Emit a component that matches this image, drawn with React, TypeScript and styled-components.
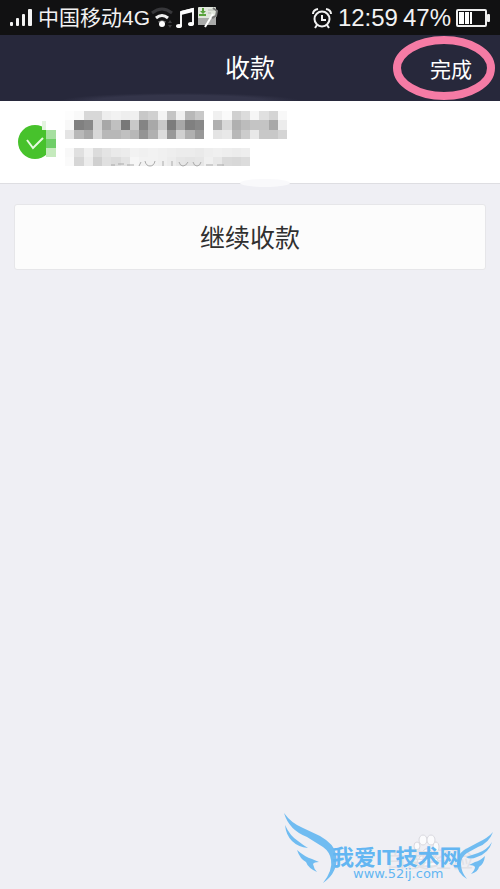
import React from 'react';
import styled, { createGlobalStyle } from 'styled-components';

const GlobalStyle = createGlobalStyle`
  * { box-sizing: border-box; }
  body {
    margin: 0;
    background: #efeff4;
    font-family: "Liberation Sans", "Noto Sans CJK SC", sans-serif;
  }
  button { font-family: inherit; cursor: pointer; }
`;

const Screen = styled.div`
  min-height: 100vh;
  display: flex;
  flex-direction: column;
`;

const StatusBar = styled.div`
  height: 35px;
  padding: 0 10px 0 9px;
  display: flex;
  align-items: center;
  justify-content: space-between;
  background: #111112;
  color: #f2f2f2;
`;

const StatusGroup = styled.div<{ $gap: number }>`
  display: flex;
  align-items: center;
  gap: ${(p) => p.$gap}px;
`;

const Carrier = styled.span`
  font-size: 21px;
  line-height: 32px;
  white-space: nowrap;
`;

const Reading = styled.span`
  font-size: 24px;
  line-height: 34px;
  white-space: nowrap;
`;

const Header = styled.header`
  height: 66px;
  display: grid;
  grid-template-columns: 1fr auto 1fr;
  align-items: center;
  background: radial-gradient(ellipse 120px 8px at 36% 100%, #34354a 0 70%, transparent) #27283b;
  color: #fff;
`;

const Title = styled.h1`
  grid-column: 2;
  margin: 0;
  font-size: 25px;
  font-weight: 400;
  line-height: 66px;
`;

const DoneButton = styled.button`
  justify-self: end;
  position: relative;
  height: 66px;
  padding: 0 28px 0 20px;
  border: 0;
  background: none;
  color: #fff;
  font-size: 21px;
`;

const Ring = styled.svg`
  position: absolute;
  right: 4px;
  top: 0;
  pointer-events: none;
`;

const Payer = styled.section`
  position: relative;
  height: 83px;
  padding: 10px 18px;
  display: flex;
  gap: 9px;
  background: #fff;
  border-bottom: 1px solid #dedee2;

  &::after {
    content: "";
    position: absolute;
    left: 240px;
    bottom: -4px;
    width: 50px;
    height: 8px;
    border-radius: 50%;
    background: #f9f9fb;
  }
`;

const PayerIcon = styled.svg`
  margin-top: 8px;
  flex: none;
`;

const Content = styled.main`
  padding: 20px 14px;
`;

const ContinueButton = styled.button`
  width: 100%;
  height: 66px;
  padding: 0 0 2px;
  border: 1px solid #e6e6e9;
  border-radius: 3px;
  background: #fcfcfc;
  color: #303030;
  font-size: 25px;
`;

const Footer = styled.footer`
  margin-top: auto;
  display: flex;
  justify-content: flex-end;
  padding-right: 4px;
`;

const MosaicSvg = styled.svg`
  flex: none;
`;

const mosaicRows: { y: number; h: number; cells: string[] }[] = [
  { y: 0, h: 9, cells: 'fd f9 d8 d8 ee f2 ee f0 c8 d0 f4 c4 f0 b8 c8 ff f0 fa d0 dc f6 e0 d4 f8'.split(' ') },
  { y: 9, h: 10, cells: 'f8 80 88 d4 a8 c0 78 c8 84 a8 c8 7c a8 80 88 ff b0 d8 b0 bc c4 c4 a8 ec'.split(' ') },
  { y: 19, h: 9, cells: 'e4 b8 a8 d8 b8 b8 c0 b8 94 b0 dc 98 d0 b0 98 ff e4 e8 b8 cc e8 c8 c8 d4'.split(' ') },
  { y: 37, h: 9, cells: 'f8 e0 f0 dc e4 ea ec f2 f0 f2 f0 ee ec ec ea ee f0 ee ec ee'.split(' ') },
  { y: 46, h: 9, cells: 'fa d6 ec d0 e0 dc e4 f6 f2 f2 f0 ec e6 e4 e6 f0 e8 da d8 dc'.split(' ') },
];

function Mosaic() {
  return (
    <MosaicSvg width="222" height="60" viewBox="0 0 222 60" shapeRendering="crispEdges" aria-hidden="true">
      {mosaicRows.map((row) =>
        row.cells.map((c, i) => {
          const x = Math.round(i * 9.25);
          const end = Math.round((i + 1) * 9.25);
          return <rect key={`${row.y}-${i}`} x={x} y={row.y} width={end - x} height={row.h} fill={`#${c}${c}${c}`} />;
        }),
      )}
      <g fill="none" stroke="#aaa" strokeWidth="1" shapeRendering="auto">
        <path d="M46 54h4m3-1h6m3 1h7M76 51l-2 4M80 50q1 5 5 5t5-5M98 50v5M107 50v5M114 51q1 4 4 4t5-4M128 51q1 4 4 4t4-4M141 54h7M152 54h7" />
      </g>
    </MosaicSvg>
  );
}

function Signal() {
  return (
    <svg width="23" height="19" viewBox="0 0 23 19" fill="#f4f4f4" aria-hidden="true">
      <rect x="1" y="14" width="3" height="4" rx="1" />
      <rect x="7" y="10" width="3" height="8" rx="1" />
      <rect x="13" y="6" width="3" height="12" rx="1" />
      <rect x="19" y="1" width="4" height="17" rx="1" />
    </svg>
  );
}

function StatusIcons() {
  return (
    <svg width="68" height="26" viewBox="0 0 68 26" fill="none" aria-hidden="true">
      <path d="M2 8Q12 0 22 8" stroke="#37373a" strokeWidth="3" />
      <path d="M6 13Q12 8 18 13" stroke="#ededed" strokeWidth="3" />
      <path d="M8 17Q12 14 16 17" stroke="#656565" strokeWidth="1" />
      <circle cx="12" cy="19" r="3" fill="#fff" />
      <path d="M18 18l2-3 2 3zM18 20h4l-2 3z" fill="#3c3c3e" />
      <path d="M31 21V7l12-3v15" stroke="#f4f4f4" strokeWidth="2" />
      <path d="M31 6l12-3v4l-12 3z" fill="#fff" />
      <ellipse cx="29" cy="21" rx="3" ry="2" fill="#fff" />
      <ellipse cx="41" cy="19" rx="3" ry="2" fill="#fff" />
      <rect x="48" y="2" width="18" height="18" rx="1" fill="#e1e6dd" />
      <path d="M48 13h18v7H48z" fill="#a9aaa9" />
      <path d="M52 3h2v3h2l-3 3-3-3h2zM49 9h7v2h-7z" fill="#59a33d" />
      <path d="M58 5h6M58 8h3" stroke="#b5bab3" />
      <path d="M55 22l8-13" stroke="#fff" strokeWidth="2" />
      <path d="M63 3l4 3-1 5-4 2" stroke="#777" strokeWidth="2" />
    </svg>
  );
}

function Alarm() {
  return (
    <svg width="22" height="22" viewBox="0 0 22 22" fill="none" stroke="#f2f2f2" strokeWidth="2" aria-hidden="true">
      <circle cx="11" cy="12" r="7.5" />
      <path d="M11 8v5h4M6 18l-2 3M16 18l2 3M2 7Q2 3 7 2M15 2q5 1 5 5" />
    </svg>
  );
}

function Battery() {
  return (
    <svg width="34" height="20" viewBox="0 0 34 20" aria-hidden="true">
      <rect x="1" y="2" width="29" height="16" rx="1" fill="none" stroke="#eee" strokeWidth="2" />
      <path d="M3 4h5v12H3zM9 4h4v12H9zM14 4h2v12h-2z" fill="#fff" />
      <rect x="31" y="6" width="3" height="8" rx="1" fill="#eee" />
    </svg>
  );
}

const WatermarkSvg = styled.svg`
  display: block;
  font-family: "Liberation Sans", "Noto Sans CJK SC", sans-serif;
`;

const WatermarkUrl = styled.text`
  font-family: "DejaVu Sans", sans-serif;
  font-size: 13px;
  font-weight: 400;
`;

function Watermark() {
  return (
    <WatermarkSvg width="216" height="79" viewBox="0 0 216 79" role="img" aria-label="我爱IT技术网 www.52ij.com">
      <g fill="#fbfbfd" stroke="#d9d9df" strokeWidth="1">
        <ellipse cx="137" cy="36" rx="3" ry="4" />
        <ellipse cx="143" cy="30" rx="4" ry="5" />
        <ellipse cx="151" cy="30" rx="4" ry="5" />
        <ellipse cx="156" cy="37" rx="3" ry="5" />
        <path d="M138 50q3-4 6-10 4-3 7 1 2 5 7 9 1 5-4 6h-14q-5-1-2-6z" />
      </g>
      <text x="105" y="57" fontSize="22" fill="#e1e1e6">百度经验</text>
      <g fill="#70bcf1">
        <path d="M4 3Q11 13 23 18L40 26Q54 34 56 44Q59 62 43 73Q53 60 51 50Q50 42 43 37L27 27Q9 20 4 3Z" />
        <path d="M5 15Q10 26 18 31Q23 35 28 38Q18 37 12 31Q6 25 5 15Z" />
        <path d="M17 40Q25 47 32 49L39 52Q34 52 33 54Q34 59 37 62Q28 58 26 52Q20 49 17 40Z" />
        <path d="M213 22Q209 33 198 37L187 43Q181 47 181 54Q181 62 187 69Q177 63 177 54Q177 45 184 40L197 33Q208 28 213 22Z" />
        <path d="M212 32Q207 40 198 43L186 47Q190 50 197 47Q209 43 212 32Z" />
        <path d="M205 46Q200 51 195 52L189 55Q194 55 195 57Q195 60 191 64Q198 62 199 57Q204 54 205 46Z" />
      </g>
      <g fill="#63b6f2" fontWeight="700">
        <text x="52" y="55" fontSize="22">我爱IT技术网</text>
        <WatermarkUrl x="73" y="68">www.52ij.com</WatermarkUrl>
      </g>
    </WatermarkSvg>
  );
}

export default function App() {
  return (
    <Screen>
      <GlobalStyle />
      <StatusBar>
        <StatusGroup $gap={6}>
          <Signal />
          <StatusGroup $gap={0}>
            <Carrier>中国移动4G</Carrier>
            <StatusIcons />
          </StatusGroup>
        </StatusGroup>
        <StatusGroup $gap={5}>
          <Alarm />
          <Reading>12:59</Reading>
          <Reading>47%</Reading>
          <Battery />
        </StatusGroup>
      </StatusBar>
      <Header>
        <Title>收款</Title>
        <DoneButton type="button">
          完成
          <Ring width="104" height="66" viewBox="0 0 104 66" fill="none" aria-hidden="true">
            <ellipse cx="52" cy="33" rx="47" ry="28" stroke="#f57ba5" strokeWidth="8" />
          </Ring>
        </DoneButton>
      </Header>
      <Payer>
        <PayerIcon width="38" height="46" viewBox="0 0 38 46" aria-hidden="true">
          <circle cx="17" cy="23" r="17" fill="#47c22c" />
          <path d="M9 21l6 8 10-10" fill="none" stroke="#e7fbe1" strokeWidth="2" />
          <path d="M28 2h10v42H28z" fill="#fff" />
          <path d="M28 11h10v9H28z" fill="#a6dfa0" />
          <path d="M28 20h10v9H28z" fill="#6fce68" />
          <path d="M28 29h10v9H28z" fill="#c5eabd" />
          <path d="M24 2h4v9h-4z" fill="#e3f4df" />
        </PayerIcon>
        <Mosaic />
      </Payer>
      <Content>
        <ContinueButton type="button">继续收款</ContinueButton>
      </Content>
      <Footer>
        <Watermark />
      </Footer>
    </Screen>
  );
}
